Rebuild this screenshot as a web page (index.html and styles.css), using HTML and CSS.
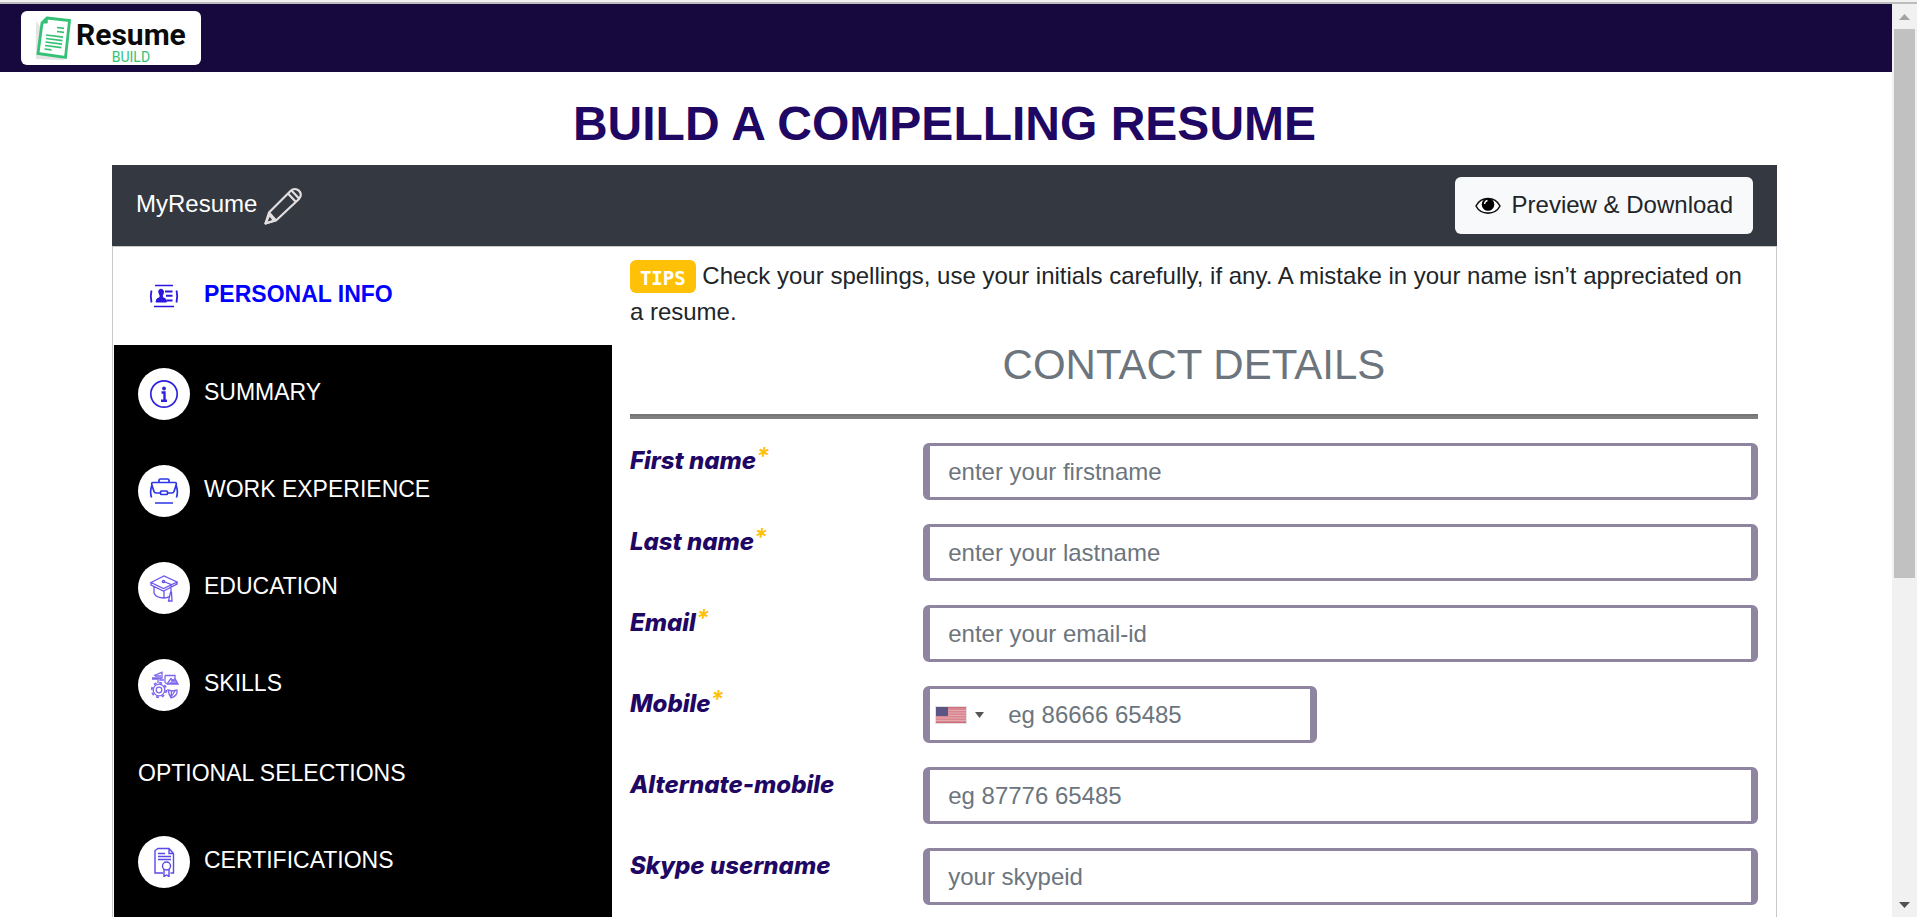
FILE: index.html
```html
<!DOCTYPE html>
<html lang="en">
<head>
<meta charset="utf-8">
<title>Resume Build</title>
<link rel="stylesheet" href="styles.css">
</head>
<body>
<div class="frame">
  <div class="page">
    <header class="navbar">
      <a class="logo" href="#" aria-label="Resume Build">
        <svg class="logo-mark" viewBox="0 0 36 44" aria-hidden="true">
          <path d="M0 5v38l28 1z" fill="#e4e4e4"/>
          <path d="M11 2L33.500 4.500L29.500 41.500L2 37.500L6 7z" fill="#fff" stroke="#34c176" stroke-width="2.800"/>
          <path d="M11 1.500l.3 5.500L6 7z" fill="#34c176" stroke="#34c176"/>
          <path d="M21 11.500l7 .8M21 15.500l7 .8M10 19l17 2.200M10 22.500l16.500 2.200M9.500 26l16.500 2.200M9 29.500l16.500 2.200M8.500 33l7 .9" stroke="#34c176" stroke-width="1.700"/>
        </svg>
        <span class="logo-words"><span class="logo-name">Resume</span><span class="logo-sub">BUILD</span></span>
      </a>
    </header>
    <main class="container">
      <h1 class="title">BUILD A COMPELLING RESUME</h1>
      <div class="toolbar">
        <span class="resume-name">MyResume</span>
        <button class="icon-button" type="button" aria-label="Rename resume">
          <svg class="pencil" viewBox="0 0 38 38" fill="none" stroke="#e3dfe0" stroke-width="2.200" stroke-linejoin="round" aria-hidden="true">
            <path d="M1.500 36.500L5 25.500L26.500 4C32 -1.500 40.500 6 35 12L12 33.500z"/>
            <path d="M5 25.500l7 8M1.500 36.500l4-9 4.500 6zM24 6.500l7.500 8M27.500 3.500l7.500 8"/>
          </svg>
        </button>
        <button class="preview" type="button">
          <svg class="eye" viewBox="0 0 26 20" aria-hidden="true">
            <path d="M1 11C6 1 20 1 25 11C20 20.500 6 20.500 1 11z" fill="#fff" stroke="#111" stroke-width="1.600"/>
            <circle cx="13" cy="9.500" r="6.300" fill="#000"/>
            <path d="M9.500 9a4 4 0 0 1 3-3.500" stroke="#fff" fill="none" stroke-width="1.300"/>
          </svg>
          Preview &amp; Download
        </button>
      </div>
      <div class="card">
        <nav class="sidebar">
          <a class="item active" href="#">
            <span class="badge"><svg viewBox="0 0 30 30" aria-hidden="true">
              <g fill="none" stroke="#2a18dc"><path d="M6 4.500h18M5 25.500h20" stroke-width="1.500"/><path d="M2.500 9.500q-1.500 5.500 0 12M27.500 9.500q1.500 5.500 0 12" stroke-width="1.800"/><path d="M16 10.500h7.500M17 14.800h6.500M17.500 19.500h6" stroke-width="1.900"/></g>
              <path d="M7 21q0-4 4-4.500v-2q-3-6 1-6.300q4 .3 1.500 6.300v2q4 .5 4 4.500z" fill="#2a18dc" stroke="#2a18dc"/>
            </svg></span>
            <span class="item-name">PERSONAL INFO</span>
          </a>
          <a class="item" href="#">
            <span class="badge"><svg viewBox="0 0 30 30" aria-hidden="true">
              <circle cx="15" cy="15" r="13.200" fill="none" stroke="#2f22dd" stroke-width="1.700"/>
              <circle cx="15" cy="9.500" r="1.900" fill="#2f22dd"/>
              <path d="M12.500 13.500h3v8.300M12 21.800h6" fill="none" stroke="#2f22dd" stroke-width="2.400"/>
            </svg></span>
            <span class="item-name">SUMMARY</span>
          </a>
          <a class="item" href="#">
            <span class="badge"><svg viewBox="0 0 30 30" fill="none" stroke="#2d36e6" stroke-width="1.700" aria-hidden="true">
              <path d="M10 6.500V4.500q0-1.500 1.500-1.500h7q1.500 0 1.500 1.500v2M4 6.500h22q2 0 1 3l-2 6q-.5 1.500-2 1.500h-4.500M4 6.500q-2 0-1 3l2 6q.5 1.500 2 1.500h4.500"/>
              <rect x="11.500" y="15" width="7" height="3.500" rx="1"/>
              <path d="M3 9q-2.500 6-.5 12.500M27 9q2.500 6 .5 12.500M6 27h18"/>
            </svg></span>
            <span class="item-name">WORK EXPERIENCE</span>
          </a>
          <a class="item" href="#">
            <span class="badge"><svg viewBox="0 0 30 30" fill="none" stroke="#6a55ec" stroke-width="1.300" aria-hidden="true">
              <path d="M2 9.500L15 3l13 6L14.500 15.500zM2 9.500v2.500l12.500 6L28 11V9M5 13.500v6.500q2 5 10 5q3.500 0 5-1.500M15 18v7M14.500 8.500l7.500 3v8"/>
              <circle cx="14.500" cy="8.500" r="1.200"/><path d="M21.500 19.500l-2 8.500h3.500l-.5-8.500z"/>
            </svg></span>
            <span class="item-name">EDUCATION</span>
          </a>
          <a class="item" href="#">
            <span class="badge"><svg viewBox="0 0 30 30" fill="none" stroke="#7d66ee" stroke-width="1.300" aria-hidden="true">
              <circle cx="10" cy="20" r="5.800"/><circle cx="10" cy="20" r="2.800"/>
              <circle cx="10" cy="20" r="7.300" stroke-width="1.800" stroke-dasharray="2.900 2.833"/>
              <path d="M3 9h6M5 5.500l8-3.200V8H3M9 8v5M11 8v2h4M6 6h6M16 5.500h10v3M16 5.500v7l3 2M19 12.500l3-4 2 2 2-2 3 5.500H19zM20.500 13h7.500M22 11h5M19 20l4 1 5-1v2.500q-1 4-6 5.500q-2-3-3-8zM22.500 21.500l-.5 6M22 27l4-6"/>
            </svg></span>
            <span class="item-name">SKILLS</span>
          </a>
          <p class="group">OPTIONAL SELECTIONS</p>
          <a class="item" href="#">
            <span class="badge"><svg viewBox="0 0 30 30" fill="none" stroke="#5b49e6" stroke-width="1.400" aria-hidden="true">
              <path d="M14 26H6V3.500L9 1.500h11l4.500 5V26h-3M20 1.500V6.500h4.500M9 6.500h7M9 9.500h13M9 12.500h13"/>
              <circle cx="17.500" cy="19" r="4"/><path d="M15 22v7.500l2.500-1.500 2.500 1.500V22"/>
            </svg></span>
            <span class="item-name">CERTIFICATIONS</span>
          </a>
        </nav>
        <section class="content">
          <p class="tips"><span class="tag">TIPS</span> Check your spellings, use your initials carefully, if any. A mistake in your name isn’t appreciated on a resume.</p>
          <h2 class="subtitle">CONTACT DETAILS</h2>
          <hr class="rule">
          <form class="form">
            <div class="row">
              <label for="first">First name<sup>*</sup></label>
              <input class="field" id="first" type="text" placeholder="enter your firstname">
            </div>
            <div class="row">
              <label for="last">Last name<sup>*</sup></label>
              <input class="field" id="last" type="text" placeholder="enter your lastname">
            </div>
            <div class="row">
              <label for="email">Email<sup>*</sup></label>
              <input class="field" id="email" type="email" placeholder="enter your email-id">
            </div>
            <div class="row">
              <label for="mobile">Mobile<sup>*</sup></label>
              <div class="field phone">
                <button class="country" type="button" aria-label="Country: United States">
                  <svg class="flag" viewBox="0 0 32 18" aria-hidden="true">
                    <rect width="32" height="18" fill="#e3e0e1"/>
                    <rect x="1" y="1" width="30" height="16" fill="#d88791"/>
                    <path d="M1 4.500h30M1 7h30M1 9.500h30M1 12h30M1 14.500h30" stroke="#e5a8ae"/>
                    <path d="M1 1.500h30M1 16.500h30" stroke="#cf6d78"/>
                    <rect x="1" y="1" width="12" height="9" fill="#5a5585"/>
                  </svg>
                  <svg class="caret" viewBox="0 0 9 6" aria-hidden="true"><path d="M0 0h9L4.500 6z" fill="#555"/></svg>
                </button>
                <input class="phone-input" id="mobile" type="tel" placeholder="eg 86666 65485">
              </div>
            </div>
            <div class="row">
              <label for="alt">Alternate-mobile</label>
              <input class="field" id="alt" type="tel" placeholder="eg 87776 65485">
            </div>
            <div class="row">
              <label for="skype">Skype username</label>
              <input class="field" id="skype" type="text" placeholder="your skypeid">
            </div>
          </form>
        </section>
      </div>
    </main>
  </div>
  <div class="scrollbar" aria-hidden="true">
    <svg class="arrow" viewBox="0 0 11 6"><path d="M0 6h11L5.500 0z" fill="#a3a3a3"/></svg>
    <div class="track"><div class="thumb"></div></div>
    <svg class="arrow" viewBox="0 0 11 6"><path d="M0 0h11L5.500 6z" fill="#505050"/></svg>
  </div>
</div>
</body>
</html>
```
FILE: styles.css
```css
* { box-sizing: border-box; }

body {
  display: flex;
  flex-direction: column;
  height: 100vh;
  margin: 0;
  border-top: 2px solid #f1f1f1;
  background: #fff;
  color: #212529;
  font-family: "Liberation Sans", Arial, sans-serif;
  font-size: 24px;
  line-height: 36px;
}

button, input { font: inherit; color: inherit; }

.frame {
  display: flex;
  flex: 1;
  min-height: 0;
  overflow: hidden;
  border-top: 2px solid #bdbdbd;
}

.page {
  flex: 1;
  min-width: 0;
}

.navbar {
  padding: 7px 21px;
  background: #17093d;
}

.logo {
  display: flex;
  gap: 4px;
  width: 180px;
  height: 54px;
  padding: 5px 15px 0;
  border-radius: 6px;
  background: #fff;
  text-decoration: none;
}

.logo-mark { width: 36px; height: 44px; }

.logo-words {
  display: flex;
  flex-direction: column;
  align-items: center;
  font-family: Roboto, sans-serif;
}

.logo-name {
  color: #0a0a0a;
  font-size: 30px;
  font-weight: 700;
  line-height: 37px;
}

.logo-sub {
  color: #34c176;
  font-size: 14px;
  line-height: 8px;
}

.container { padding: 23px 115px 0 112px; }

.title {
  margin: 0 0 13px;
  color: #1f0764;
  font-size: 48px;
  line-height: 57px;
  text-align: center;
}

.toolbar {
  display: flex;
  align-items: center;
  height: 81px;
  padding: 0 24px;
  background: #343840;
  color: #fff;
}

.resume-name { padding-bottom: 3px; }

.icon-button {
  display: flex;
  margin-left: 7px;
  padding: 0;
  border: 0;
  background: none;
}

.pencil { width: 38px; height: 38px; }

.preview {
  display: flex;
  align-items: center;
  gap: 11px;
  margin-left: auto;
  padding: 10px 20px 11px;
  border: 0;
  border-radius: 6px;
  background: #f8f9fa;
  color: #212529;
}

.eye { width: 26px; height: 20px; }

.card {
  display: flex;
  border: 1px solid #c8c8c8;
}

.sidebar {
  width: 30%;
  padding-bottom: 98px;
  border-left: 1px solid #fff;
  background: #000;
}

.item {
  display: flex;
  align-items: center;
  gap: 14px;
  height: 97px;
  padding: 0 24px;
  color: #fff;
  font-size: 23px;
  text-decoration: none;
}

.item.active {
  height: 98px;
  background: #fff;
  color: #00f;
  font-weight: 700;
}

.item-name { padding-bottom: 4px; }

.badge {
  display: grid;
  place-items: center;
  width: 52px;
  height: 52px;
  border-radius: 50%;
  background: #fff;
}

.badge svg { width: 30px; height: 30px; }

.group {
  height: 80px;
  margin: 0;
  padding: 22px 24px;
  color: #fff;
  font-size: 23px;
}

.content {
  flex: 1;
  min-width: 0;
  padding: 11px 18px 0;
}

.tips { margin: 0 0 10px; }

.tag {
  display: inline-block;
  margin-top: 2px;
  padding: 9px 10px 5px;
  border-radius: 6px;
  background: #ffc107;
  color: #fff;
  font-family: "DejaVu Sans Mono", monospace;
  font-size: 19px;
  font-weight: 700;
  line-height: 19px;
  vertical-align: top;
}

.subtitle {
  margin: 0;
  color: #6c757d;
  font-size: 42px;
  font-weight: 400;
  line-height: 50px;
  text-align: center;
}

.rule {
  height: 5px;
  margin: 24px 0;
  border: 0;
  border-top: 2px solid #767676;
  background: #808080;
}

.form {
  display: grid;
  gap: 24px;
}

.row {
  display: grid;
  grid-template-columns: 26% 74%;
  align-items: start;
}

.row label {
  color: #1f0764;
  font-family: Inter, sans-serif;
  font-style: italic;
  font-weight: 800;
}

.row sup {
  color: #ffc107;
  font-size: 24px;
  font-weight: 600;
  line-height: 0;
  vertical-align: 4px;
}

.field {
  width: 100%;
  height: 57px;
  padding: 0 18px;
  border: 3px solid #9085a0;
  border-width: 3px 7px;
  border-radius: 6px;
  background: #fff;
}

.field::placeholder, .phone-input::placeholder {
  color: #6c757d;
  opacity: 1;
}

.phone {
  display: flex;
  align-items: center;
  width: 394px;
  padding: 0;
}

.country {
  display: flex;
  align-items: center;
  gap: 8px;
  padding: 0 5px;
  border: 0;
  background: none;
}

.flag { width: 32px; height: 18px; }
.caret { width: 9px; height: 6px; }

.phone-input {
  flex: 1;
  min-width: 0;
  padding: 0 19px;
  border: 0;
  outline: 0;
}

.scrollbar {
  display: flex;
  flex-direction: column;
  align-items: center;
  width: 25px;
  padding: 10px 2px 9px;
  background: #f1f1f1;
}

.arrow { width: 11px; height: 6px; }

.track {
  flex: 1;
  width: 100%;
  padding: 9px 0;
}

.thumb {
  height: 63.5%;
  background: #c1c1c1;
}
```
